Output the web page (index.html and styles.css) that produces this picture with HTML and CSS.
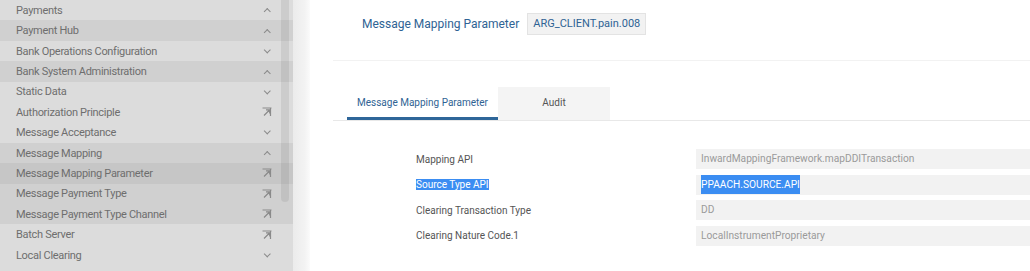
FILE: index.html
```html
<!DOCTYPE html>
<html lang="en">
<head>
    <meta charset="UTF-8">
    <title>Message Mapping Parameter</title>
    <link rel="stylesheet" href="styles.css">
</head>
<body>
    <div class="layout">
        <aside class="sidebar">
            <ul class="menu">
                <li class="item light">Payments <span class="chev up"></span></li>
                <li class="item dark">Payment Hub <span class="chev up"></span></li>
                <li class="item light">Bank Operations Configuration <span class="chev down"></span></li>
                <li class="item dark">Bank System Administration <span class="chev up"></span></li>
                <li class="item light">Static Data <span class="chev down"></span></li>
                <li class="item light">Authorization Principle <span class="link-icon"><svg width="10" height="10" viewBox="0 0 10 10"><path d="M0.5 1H9.5M8.5 1V9M2 8.5L7.5 3M4 2.8H7.7V6.5" fill="none" stroke="#8a8a8a" stroke-width="1.2"/></svg></span></li>
                <li class="item light">Message Acceptance <span class="chev down"></span></li>
                <li class="item dark">Message Mapping <span class="chev up"></span></li>
                <li class="item selected">Message Mapping Parameter <span class="link-icon"><svg width="10" height="10" viewBox="0 0 10 10"><path d="M0.5 1H9.5M8.5 1V9M2 8.5L7.5 3M4 2.8H7.7V6.5" fill="none" stroke="#8a8a8a" stroke-width="1.2"/></svg></span></li>
                <li class="item dark">Message Payment Type <span class="link-icon"><svg width="10" height="10" viewBox="0 0 10 10"><path d="M0.5 1H9.5M8.5 1V9M2 8.5L7.5 3M4 2.8H7.7V6.5" fill="none" stroke="#8a8a8a" stroke-width="1.2"/></svg></span></li>
                <li class="item dark">Message Payment Type Channel <span class="link-icon"><svg width="10" height="10" viewBox="0 0 10 10"><path d="M0.5 1H9.5M8.5 1V9M2 8.5L7.5 3M4 2.8H7.7V6.5" fill="none" stroke="#8a8a8a" stroke-width="1.2"/></svg></span></li>
                <li class="item light">Batch Server <span class="link-icon"><svg width="10" height="10" viewBox="0 0 10 10"><path d="M0.5 1H9.5M8.5 1V9M2 8.5L7.5 3M4 2.8H7.7V6.5" fill="none" stroke="#8a8a8a" stroke-width="1.2"/></svg></span></li>
                <li class="item light">Local Clearing <span class="chev down"></span></li>
            </ul>
            <div class="scroll-thumb"></div>
        </aside>
        <div class="gutter"></div>
        <main class="content">
            <div class="page-head">
                <span class="page-title">Message Mapping Parameter</span>
                <span class="page-key">ARG_CLIENT.pain.008</span>
            </div>

            <div class="tabs">
                <div class="tab active">Message Mapping Parameter</div>
                <div class="tab">Audit</div>
            </div>

            <div class="fields">
                <div class="field">
                    <label>Mapping API</label>
                    <div class="value">InwardMappingFramework.mapDDITransaction</div>
                </div>
                <div class="field">
                    <label><span class="sel">Source Type API</span></label>
                    <div class="value"><span class="sel sel-value">PPAACH.SOURCE.API</span></div>
                </div>
                <div class="field">
                    <label>Clearing Transaction Type</label>
                    <div class="value">DD</div>
                </div>
                <div class="field">
                    <label>Clearing Nature Code.1</label>
                    <div class="value">LocalInstrumentProprietary</div>
                </div>
            </div>
        </main>
    </div>
</body>
</html>
```

FILE: styles.css
```css
body {
    margin: 0;
    font-family: Roboto, "Liberation Sans", sans-serif;
    background: #fff;
    overflow: hidden;
}
.layout {
    display: flex;
    height: 271px;
}
.sidebar {
    position: relative;
    width: 293px;
    flex-shrink: 0;
    background: #dcdcdc;
    overflow: hidden;
}
.menu {
    list-style: none;
    margin: 0;
    padding: 0;
}
.item {
    display: flex;
    align-items: center;
    justify-content: space-between;
    height: 20.42px;
    padding: 0 22px 0 16px;
    font-size: 11px;
    letter-spacing: -0.3px;
    color: #6e6e6e;
    box-sizing: border-box;
}
.item.light {
    background: #dcdcdc;
}
.item.dark {
    background: #d0d0d0;
}
.item.selected {
    background: #c6c6c6;
}
.chev {
    width: 3.5px;
    height: 3.5px;
    border-left: 1.2px solid #8a8a8a;
    border-top: 1.2px solid #8a8a8a;
    margin-right: 2px;
}
.chev.up {
    transform: rotate(45deg);
    margin-top: 3px;
}
.chev.down {
    transform: rotate(225deg);
    margin-top: -2px;
}
.link-icon {
    display: flex;
    margin-right: -1px;
}
.scroll-thumb {
    position: absolute;
    top: -10px;
    left: 281px;
    width: 8px;
    height: 212px;
    border-radius: 4px;
    background: rgba(0, 0, 0, 0.07);
}
.gutter {
    width: 17px;
    flex-shrink: 0;
    background: linear-gradient(to right, #ebebeb, #f3f3f3 70%, #fbfbfb);
}
.content {
    flex: 1;
    padding-left: 23px;
    min-width: 0;
}
.page-head {
    display: flex;
    align-items: center;
    padding: 13px 0 25px 29px;
    border-bottom: 1px solid #f2f2f2;
}
.page-title {
    font-size: 12px;
    color: #2f6394;
    margin-right: 8px;
}
.page-key {
    height: 22px;
    line-height: 20px;
    box-sizing: border-box;
    padding: 0 5px;
    background: #f2f2f2;
    border: 1px solid #e3e3e3;
    font-size: 11px;
    color: #2f6394;
}
.tabs {
    display: flex;
    margin-top: 26px;
    padding-left: 14px;
    border-bottom: 1px solid #e8e8e8;
}
.tab {
    height: 33px;
    line-height: 32px;
    box-sizing: border-box;
    width: 112px;
    text-align: center;
    font-size: 10px;
    color: #555;
    background: #f4f4f4;
}
.tab.active {
    width: 151px;
    background: #fff;
    color: #2f6394;
    border-bottom: 3px solid #2e6699;
}
.fields {
    padding: 28px 0 0 83px;
}
.field {
    display: flex;
    align-items: center;
    height: 20px;
    margin-bottom: 5.5px;
}
.field label {
    width: 280px;
    flex-shrink: 0;
    font-size: 10px;
    color: #555;
}
.value {
    flex: 1;
    height: 20px;
    line-height: 20px;
    padding-left: 5px;
    background: #f2f2f2;
    font-size: 10.2px;
    color: #9a9a9a;
}
.sel {
    background: #3b8df2;
    color: #fff;
}
.sel-value {
    display: inline-block;
    height: 19px;
    line-height: 19px;
}
```
